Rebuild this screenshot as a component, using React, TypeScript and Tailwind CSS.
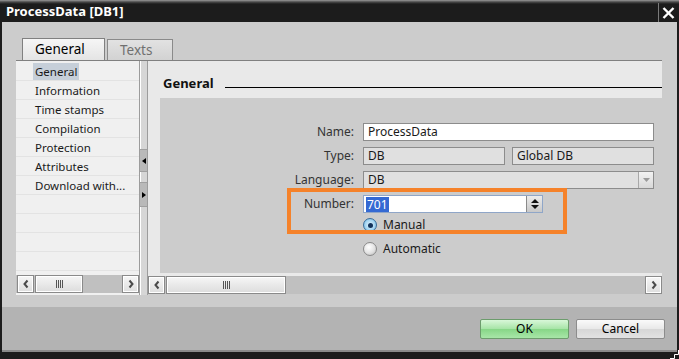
import React from "react";

function Chevron({ dir }: { dir: "left" | "right" }) {
  return (
    <svg width="8" height="10" viewBox="0 0 8 10">
      {dir === "left" ? (
        <path d="M5.5 1.5 L2.5 5 L5.5 8.5" fill="none" stroke="#4a4a4a" strokeWidth="2" />
      ) : (
        <path d="M2.5 1.5 L5.5 5 L2.5 8.5" fill="none" stroke="#4a4a4a" strokeWidth="2" />
      )}
    </svg>
  );
}

function ScrollBtn({ dir }: { dir: "left" | "right" }) {
  return (
    <div className="w-[17px] h-[18px] shrink-0 border border-[#8a8a8a] bg-[linear-gradient(#f6f6f6,#dedede)] shadow-[inset_0_0_0_1px_#ffffff] flex items-center justify-center">
      <Chevron dir={dir} />
    </div>
  );
}

function Thumb({ w }: { w: string }) {
  return (
    <div className={`${w} h-[18px] shrink-0 border border-[#8a8a8a] bg-[linear-gradient(#f6f6f6,#dcdcdc)] shadow-[inset_0_0_0_1px_#ffffff] flex items-center justify-center gap-[1px]`}>
      <div className="w-[1px] h-[8px] bg-[#555]" />
      <div className="w-[1px] h-[8px] bg-[#555]" />
      <div className="w-[1px] h-[8px] bg-[#555]" />
      <div className="w-[1px] h-[8px] bg-[#555]" />
    </div>
  );
}

const navItems = [
  "General",
  "Information",
  "Time stamps",
  "Compilation",
  "Protection",
  "Attributes",
  "Download with...",
  "",
  "",
  "",
  "",
  "",
];

export default function App() {
  return (
    <div className="relative w-[679px] h-[359px] overflow-hidden bg-[#1c1c1c] flex flex-col font-['Noto_Sans','Open_Sans',sans-serif] text-[12px] text-[#1a1a1a]">
      {/* Title bar */}
      <div className="h-[22px] shrink-0 flex items-stretch bg-[linear-gradient(#9a9a9a_0px,#4a4a4a_2px,#1c1c1c_4px)]">
        <div className="pl-[6px] pt-[1px] flex items-center text-white font-bold text-[13px] leading-none">
          ProcessData [DB1]
        </div>
        <div className="ml-auto mr-[2px] mt-[3px] w-[19px] border-l border-[#7a7a7a] flex items-center justify-center">
          <svg width="13" height="12" viewBox="0 0 13 12">
            <path d="M1.5 1 L11.5 11 M11.5 1 L1.5 11" stroke="#ffffff" strokeWidth="2.4" />
          </svg>
        </div>
      </div>

      {/* Body */}
      <div className="mx-[2px] flex-1 flex flex-col bg-[#cccccc]">
        {/* Tabs */}
        <div className="pt-[16px] pl-[20px] flex items-end gap-[2px] h-[38px] shrink-0">
          <div className="w-[83px] h-[22px] border border-b-0 border-[#808080] bg-[linear-gradient(#f6f6f6,#e4e4e4)] pl-[12px] flex items-center text-[13.5px] text-black">
            General
          </div>
          <div className="w-[66px] h-[21px] border border-b-0 border-[#8a8a8a] bg-[linear-gradient(#e2e2e2,#d2d2d2)] pl-[12px] flex items-center text-[13.5px] text-[#707070]">
            Texts
          </div>
        </div>

        {/* Tab panel */}
        <div className="ml-[14px] mr-[15px] h-[235px] shrink-0 border-t border-[#808080] flex">
          {/* Nav */}
          <div className="w-[123px] flex flex-col bg-[#f0f0f0]">
            <div className="flex-1 overflow-hidden pt-[1px] text-[11.5px]">
              {navItems.map((t, i) => (
                <div key={i} className="h-[19px] border-b border-[#e3e3e3] pl-[17px] flex items-center">
                  {t && (
                    <span className={`px-[2px] h-[17px] leading-[17px] ${i === 0 ? "bg-[#c6cfd9]" : ""}`}>{t}</span>
                  )}
                </div>
              ))}
            </div>
            <div className="h-[18px] shrink-0 bg-[#c0c0c0] flex pl-[1px]">
              <ScrollBtn dir="left" />
              <div className="ml-[1px]">
                <Thumb w="w-[48px]" />
              </div>
              <div className="ml-auto">
                <ScrollBtn dir="right" />
              </div>
            </div>
            <div className="h-[2px] shrink-0" />
          </div>

          {/* Splitter */}
          <div className="w-[9px] shrink-0 border-l border-r border-[#9c9c9c] bg-[#d6d6d6] shadow-[inset_1px_0_0_#ffffff] flex flex-col pt-[88px]">
            <div className="h-[23px] border-y border-[#a0a0a0] bg-[#b9b9b9] flex items-center justify-center">
              <svg width="4" height="6" viewBox="0 0 4 6">
                <path d="M4 0 L0 3 L4 6 Z" fill="#000" />
              </svg>
            </div>
            <div className="h-[10px]" />
            <div className="h-[25px] border-y border-[#a0a0a0] bg-[#b9b9b9] flex items-center justify-center">
              <svg width="4" height="6" viewBox="0 0 4 6">
                <path d="M0 0 L4 3 L0 6 Z" fill="#000" />
              </svg>
            </div>
          </div>

          {/* Right panel */}
          <div className="flex-1 flex flex-col bg-[#e9e9e9]">
            <div className="h-[37px] shrink-0 flex items-end pb-[6px] pl-[15px]">
              <span className="font-bold text-[13px] leading-[18px] text-[#111]">General</span>
              <div className="flex-1 h-[1px] bg-black mb-[4px] ml-[11px]" />
            </div>
            <div className="flex-1 pl-[12px] pb-[3px] flex">
              <div className="flex-1 bg-[#cccccc] pt-[25px] pr-[8px]">
                <div className="flex items-center h-[18px] mb-[6px]">
                  <div className="w-[203px] pr-[9px] text-right text-[#333]">Name:</div>
                  <div className="flex-1 h-[18px] border border-[#8c8c8c] bg-white pl-[4px] flex items-center">ProcessData</div>
                </div>
                <div className="flex items-center h-[18px] mb-[6px]">
                  <div className="w-[203px] pr-[9px] text-right text-[#333]">Type:</div>
                  <div className="w-[142px] h-[18px] border border-[#8c8c8c] bg-[#e0e0e0] pl-[4px] flex items-center">DB</div>
                  <div className="ml-[7px] flex-1 h-[18px] border border-[#8c8c8c] bg-[#e0e0e0] pl-[4px] flex items-center">Global DB</div>
                </div>
                <div className="flex items-center h-[18px] mb-[6px]">
                  <div className="w-[203px] pr-[9px] text-right text-[#333]">Language:</div>
                  <div className="flex-1 h-[18px] border border-[#8c8c8c] bg-[#e0e0e0] pl-[4px] flex items-center">
                    <span>DB</span>
                    <div className="ml-auto w-[15px] h-full border-l border-[#a8a8a8] bg-[linear-gradient(#f2f2f2,#d8d8d8)] flex items-center justify-center">
                      <svg width="7" height="4" viewBox="0 0 7 4">
                        <path d="M0 0 L7 0 L3.5 4 Z" fill="#9a9a9a" />
                      </svg>
                    </div>
                  </div>
                </div>
                <div className="flex items-center h-[18px]">
                  <div className="w-[203px] pr-[9px] text-right text-[#333]">Number:</div>
                  <div className="w-[180px] h-[18px] border border-[#8fa6c8] bg-white pl-[2px] flex items-center">
                    <span className="bg-[#3469d3] text-white px-[1px] h-[15px] leading-[15px]">701</span>
                    <div className="ml-auto w-[16px] h-full border-l border-[#8a8a8a] bg-[linear-gradient(#ececec,#c8c8c8)] flex flex-col items-center justify-center gap-[2px]">
                      <svg width="8" height="4" viewBox="0 0 8 4">
                        <path d="M0 4 L8 4 L4 0 Z" fill="#111" />
                      </svg>
                      <svg width="8" height="4" viewBox="0 0 8 4">
                        <path d="M0 0 L8 0 L4 4 Z" fill="#111" />
                      </svg>
                    </div>
                  </div>
                </div>
                <div className="flex items-center h-[18px] mt-[3px] mb-[6px] pl-[203px]">
                  <div className="w-[14px] h-[14px] rounded-full border border-[#3a6d9a] bg-[radial-gradient(circle,#e8f6ff_0%,#9fd2f0_60%,#5aa3d4_100%)] flex items-center justify-center">
                    <div className="w-[5px] h-[5px] rounded-full bg-[#12325a]" />
                  </div>
                  <span className="ml-[6px]">Manual</span>
                </div>
                <div className="flex items-center h-[18px] pl-[203px]">
                  <div className="w-[14px] h-[14px] rounded-full border border-[#8a8a8a] bg-[radial-gradient(circle_at_40%_35%,#ffffff_0%,#e2e2e2_55%,#b4b4b4_100%)]" />
                  <span className="ml-[6px]">Automatic</span>
                </div>
              </div>
            </div>
            <div className="h-[18px] shrink-0 bg-[#c0c0c0] flex">
              <ScrollBtn dir="left" />
              <div className="ml-[1px]">
                <Thumb w="w-[120px]" />
              </div>
              <div className="ml-auto">
                <ScrollBtn dir="right" />
              </div>
            </div>
            <div className="h-[1px] shrink-0 bg-[#cccccc]" />
          </div>
        </div>

        <div className="h-[12px] shrink-0" />

        {/* Footer */}
        <div className="h-[43px] shrink-0 bg-[#b3b3b3] flex items-center justify-end gap-[7px] pr-[12px]">
          <div className="w-[89px] h-[20px] rounded-[2px] border border-[#6c9c6c] bg-[linear-gradient(#d8f7d8_0%,#a6e4a6_50%,#86d686_50%,#a8e6a8_100%)] flex items-center justify-center text-black">
            OK
          </div>
          <div className="w-[89px] h-[20px] rounded-[2px] border border-[#8c8c8c] bg-[linear-gradient(#fafafa_0%,#e8e8e8_50%,#d6d6d6_50%,#e2e2e2_100%)] flex items-center justify-center text-black">
            Cancel
          </div>
        </div>
        <div className="h-[2px] shrink-0 bg-[#8a8a8a]" />
      </div>
      <div className="h-[7px] shrink-0" />

      {/* Highlight annotation */}
      <div className="absolute left-[287px] top-[188px] w-[280px] h-[46px] border-[4px] border-[#f5822a]" />

      {/* Resize grip */}
      <svg className="absolute right-0 bottom-0" width="9" height="9" viewBox="0 0 9 9">
        <path d="M8.5 0 L8.5 4.5 L4.5 4.5 L4.5 8.5 L0 8.5" fill="none" stroke="#ffffff" strokeWidth="1" />
      </svg>
    </div>
  );
}
